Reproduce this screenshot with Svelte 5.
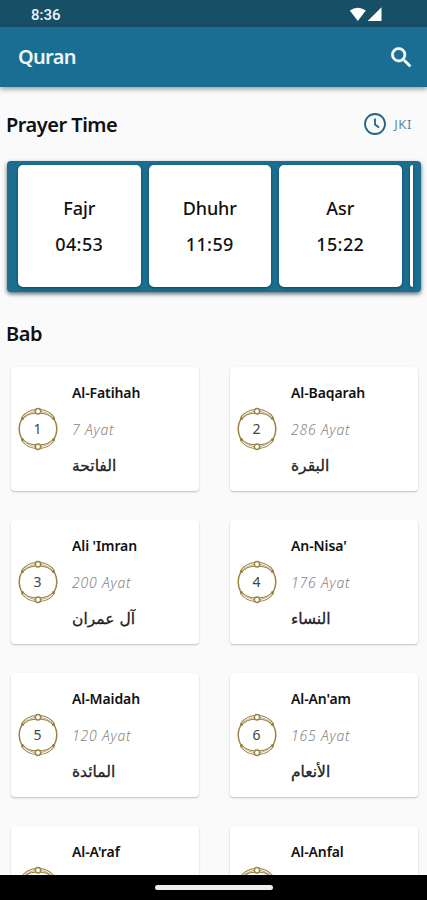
<script>
  const prayers = [
    { name: 'Fajr', time: '04:53' },
    { name: 'Dhuhr', time: '11:59' },
    { name: 'Asr', time: '15:22' }
  ];
  const surahs = [
    { no: 1, name: 'Al-Fatihah', ayat: 7, arabic: 'الفاتحة' },
    { no: 2, name: 'Al-Baqarah', ayat: 286, arabic: 'البقرة' },
    { no: 3, name: "Ali 'Imran", ayat: 200, arabic: 'آل عمران' },
    { no: 4, name: "An-Nisa'", ayat: 176, arabic: 'النساء' },
    { no: 5, name: 'Al-Maidah', ayat: 120, arabic: 'المائدة' },
    { no: 6, name: "Al-An'am", ayat: 165, arabic: 'الأنعام' },
    { name: "Al-A'raf" },
    { name: 'Al-Anfal' }
  ];
</script>

<div class="screen">
  <div class="status">
    <span>8:36</span>
    <svg width="34" height="16" viewBox="0 0 34 16" fill="#fff">
      <path d="M.8 3.500Q8.800-2 16.800 3.500L8.800 14Z" />
      <path d="M32.500 .3V14H18.700Z" />
    </svg>
  </div>
  <header>
    <h1>Quran</h1>
    <svg width="27" height="27" viewBox="0 0 24 24" fill="#fff" stroke="#fff" stroke-width=".5">
      <path d="M15.500 14h-.79l-.28-.27A6.470 6.470 0 0 0 16 9.500 6.500 6.500 0 1 0 9.500 16c1.610 0 3.090-.59 4.230-1.570l.27.28v.79l5 4.990L20.490 19l-4.990-5zm-6 0C7.010 14 5 11.990 5 9.500S7.010 5 9.500 5 14 7.010 14 9.500 11.990 14 9.500 14z" />
    </svg>
  </header>

  <main>
    <div class="heading">
      <h2>Prayer Time</h2>
      <div class="zone">
        <svg width="24" height="24" viewBox="0 0 24 24" fill="none" stroke="#236582" stroke-width="1.800">
          <circle cx="12" cy="12" r="10" />
          <path d="M12 6.500v6l4 3" />
        </svg>
        <span>JKI</span>
      </div>
    </div>

    <section class="prayers">
      {#each prayers as p}
        <article class="prayer">
          <span>{p.name}</span>
          <span class="time">{p.time}</span>
        </article>
      {/each}
      <article class="prayer peek"></article>
    </section>

    <h2 class="bab">Bab</h2>

    <section class="grid">
      {#each surahs as s}
        <article class="surah">
          <div class="seal">
            <svg width="40" height="44" viewBox="0 0 40 44" fill="none" stroke="#9a8243" stroke-width="1.100">
              <path d="M4 11.500C.5 18 .5 26 4 32.500M36 11.500C39.500 18 39.500 26 36 32.500" stroke-width="1.500" />
              {#each [0, 180] as turn}
                <g transform="rotate({turn} 20 22)">
                  <path d="M4 12.500L4 10A20 20 0 0 1 17.500 2.500M36 12.500L36 10A20 20 0 0 0 22.500 2.500M4 12.500A18.500 18.500 0 0 1 17.500 6.300M36 12.500A18.500 18.500 0 0 0 22.500 6.300" />
                  <path d="M6 10.300A19 19 0 0 1 17.500 4.500M34 10.300A19 19 0 0 0 22.500 4.500" stroke-width=".7" />
                  <circle cx="20" cy="4.300" r="2.700" fill="#fff" stroke-width="1.500" />
                  <circle cx="4.500" cy="11.500" r="1" fill="#9a8243" />
                  <circle cx="35.500" cy="11.500" r="1" fill="#9a8243" />
                </g>
              {/each}
            </svg>
            {#if s.no}<span class="no">{s.no}</span>{/if}
          </div>
          <div class="info">
            <strong>{s.name}</strong>
            {#if s.ayat}
              <em>{s.ayat} Ayat</em>
              <span class="arabic" lang="ar" dir="rtl">{s.arabic}</span>
            {/if}
          </div>
        </article>
      {/each}
    </section>
  </main>

  <footer><i></i></footer>
</div>

<style>
  :global(body) { margin: 0; }
  .screen {
    width: 427px; height: 900px; overflow: hidden;
    display: flex; flex-direction: column;
    background: #fafafa; color: #111;
    font-family: "Noto Sans", "DejaVu Sans", sans-serif;
  }
  .status {
    flex: none; height: 27px; box-sizing: border-box; padding: 3px 44px 0 31px;
    display: flex; align-items: center; justify-content: space-between;
    background: #174f67; color: #eef4f7;
    font: 500 15px/24px Roboto, sans-serif;
  }
  header {
    flex: none; height: 60px; box-sizing: border-box; padding: 0 12px 0 18px;
    display: flex; align-items: center; justify-content: space-between;
    background: #1b6e93; box-shadow: 0 2px 5px rgba(0, 0, 0, .4);
    position: relative;
  }
  h1, h2 { margin: 0; font-weight: 600; }
  h1 { color: #eef6fa; font-size: 20px; line-height: 30px; letter-spacing: -.7px; }
  h2 { font-size: 20px; line-height: 30px; letter-spacing: -.5px; }
  main { flex: 1; min-height: 0; overflow: hidden; padding: 22px 6px 0; }
  .heading { display: flex; justify-content: space-between; height: 30px; margin-bottom: 22px; }
  .heading h2 { padding-top: 1px; }
  .zone { display: flex; align-items: center; gap: 7px; margin-right: 9px; color: #5e8ba0; font-size: 13px; letter-spacing: .6px; }
  .prayers {
    display: flex; gap: 8px; height: 131px; box-sizing: border-box;
    margin: 0 0 0 1px; width: 414px; padding: 4px 8px 4px 11px;
    background: #1b6e90; border-radius: 4px; overflow: hidden;
    box-shadow: 0 2px 4px rgba(0, 30, 40, .65);
  }
  .prayer {
    flex: none; width: 122.5px; height: 122px; box-sizing: border-box; padding-top: 25px;
    display: flex; flex-direction: column; align-items: center;
    background: #fff; border-radius: 5px; box-shadow: 0 1px 3px rgba(0, 0, 0, .4);
    font-size: 18px; line-height: 36px; font-weight: 500; letter-spacing: -.1px;
  }
  .time { letter-spacing: .4px; }
  .peek { width: 3.5px; padding: 0; border-radius: 4px 0 0 4px; }
  .bab { margin-top: 27px; }
  .grid { display: grid; grid-template-columns: 188px 188px; gap: 29px 31px; margin: 18px 0 0 5px; }
  .surah {
    height: 124px; display: flex; align-items: center;
    background: #fff; border-radius: 4px; box-shadow: 0 1px 2px rgba(0, 0, 0, .24);
  }
  .seal { width: 40px; height: 44px; margin-left: 6.5px; display: grid; place-items: center; }
  .seal > * { grid-area: 1 / 1; }
  .no { font-size: 14px; line-height: 20px; color: #444; }
  .info {
    height: 111px; margin-left: 14.5px; display: flex; flex-direction: column; align-items: flex-start;
    line-height: 37px; white-space: nowrap;
  }
  strong { font-size: 14px; font-weight: 600; letter-spacing: -.1px; }
  em { font-size: 14px; font-weight: 300; color: #858585; letter-spacing: .8px; }
  .arabic { font-family: "DejaVu Sans", sans-serif; font-size: 15.5px; color: #222; -webkit-text-stroke: .3px #222; }
  footer { flex: none; height: 25px; background: #000; display: flex; justify-content: center; }
  footer i { width: 118px; height: 5px; margin-top: 10px; border-radius: 3px; background: #eee; }
</style>
